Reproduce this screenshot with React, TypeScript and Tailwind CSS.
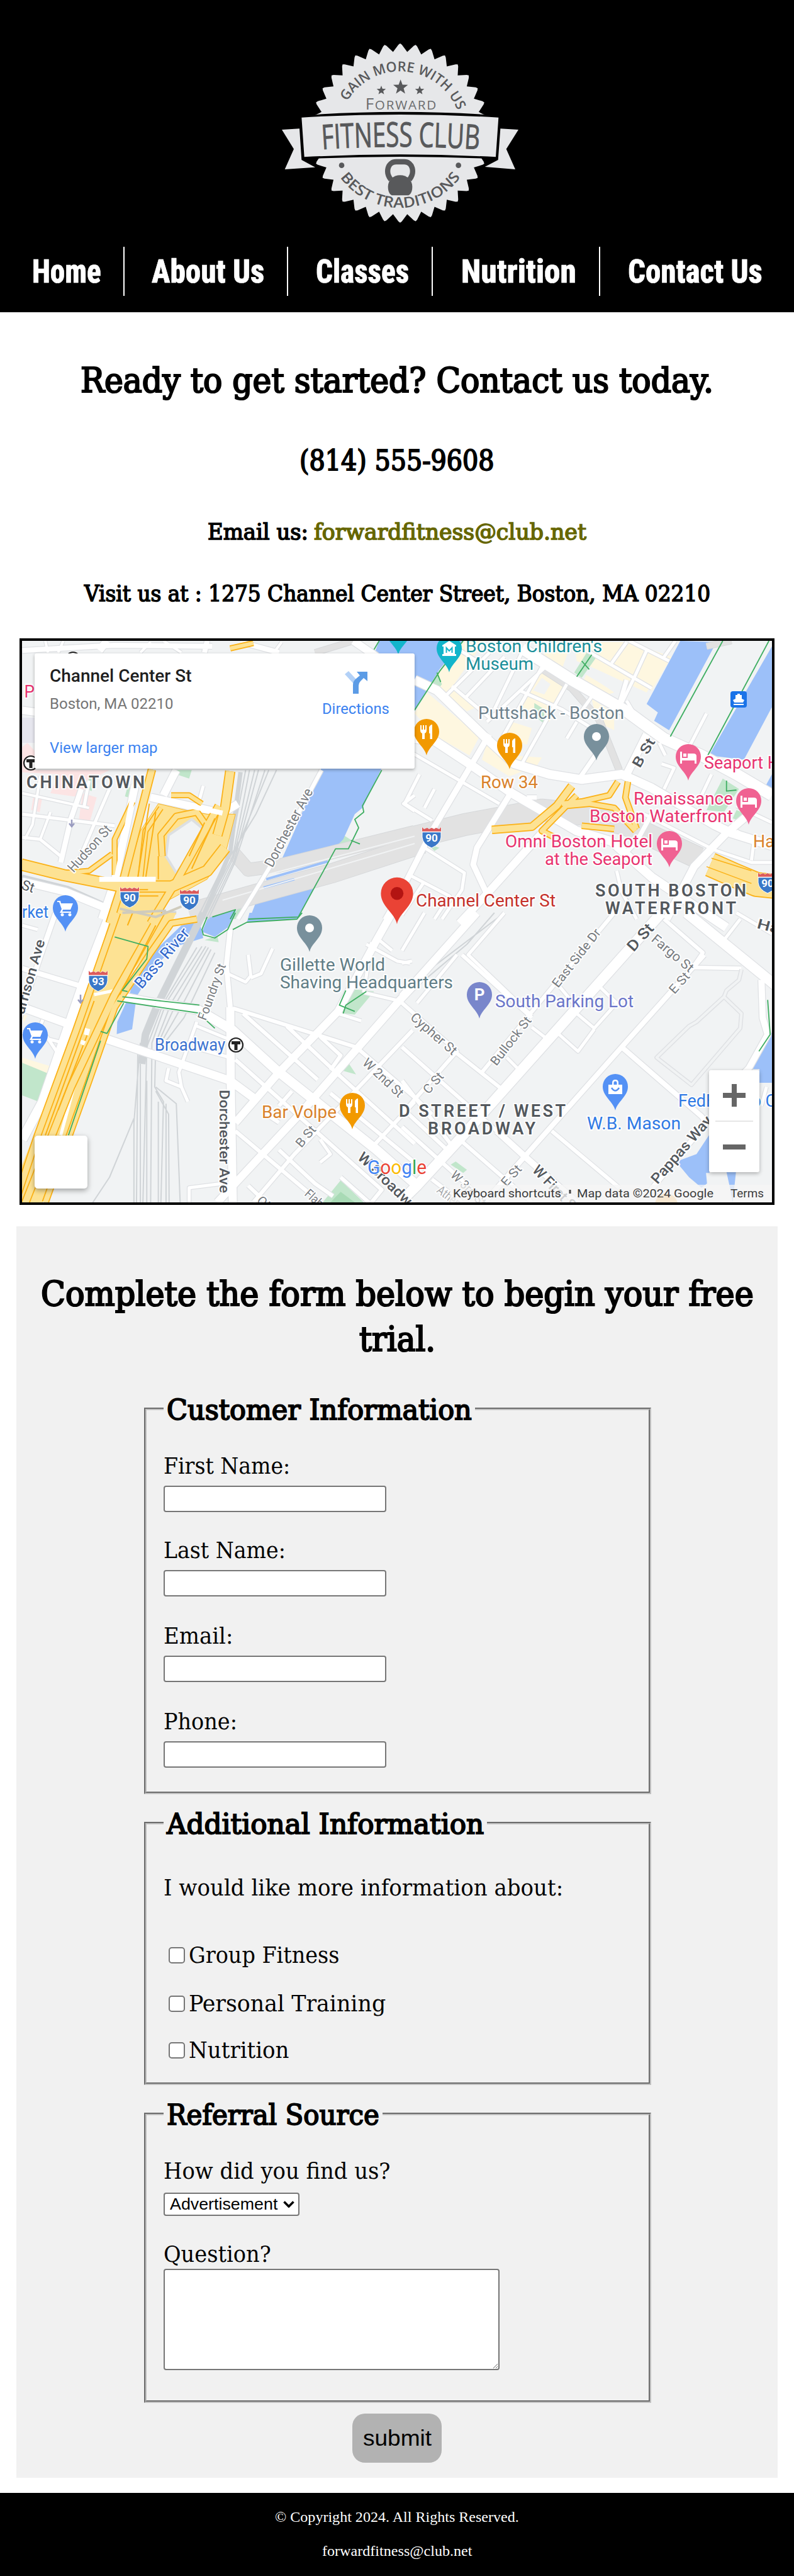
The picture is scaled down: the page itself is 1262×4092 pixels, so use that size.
import React, { useLayoutEffect, useRef, useState } from "react";

/* Inline text condensed horizontally to a given width. */
function Fit({ w, className = "", children }: { w: number; className?: string; children: React.ReactNode }) {
  const ref = useRef<HTMLSpanElement>(null);
  const [s, setS] = useState(1);
  useLayoutEffect(() => {
    if (ref.current && ref.current.offsetWidth) setS(w / ref.current.offsetWidth);
  }, [w]);
  return (
    <span className="inline-block text-left align-top" style={{ width: w }}>
      <span ref={ref} className={"inline-block origin-left whitespace-nowrap " + className} style={{ transform: `scaleX(${s})` }}>
        {children}
      </span>
    </span>
  );
}

/* ---------- Logo ---------- */
function gear() {
  const pts: string[] = [];
  const cx = 648, cy = 484;
  for (let i = 0; i < 36; i++) {
    const a = (i * 10 * Math.PI) / 180;
    const put = (r: number, d: number) => {
      const t = a + (d * Math.PI) / 180;
      pts.push(`${(cx + r * Math.sin(t)).toFixed(1)},${(cy - r * Math.cos(t)).toFixed(1)}`);
    };
    put(388, -5);
    put(421, -1.1);
    put(427, 0);
    put(421, 1.1);
  }
  return pts.join(" ");
}
const star = (cx: number, cy: number, r: number) =>
  Array.from({ length: 10 }, (_, i) => {
    const q = i % 2 ? r * 0.42 : r;
    const a = (i * Math.PI) / 5;
    return `${(cx + q * Math.sin(a)).toFixed(1)},${(cy - q * Math.cos(a)).toFixed(1)}`;
  }).join(" ");

function Logo() {
  const light = "#e6e7e9", dark = "#58595b";
  return (
    <svg viewBox="0 0 1290 960" className="block h-[320px] w-[430px]" role="img" aria-label="Forward Fitness Club">
      <defs>
        <path id="arcTop" d="M354 484 A294 294 0 0 1 942 484" />
        <path id="arcBot" d="M292 484 A356 356 0 0 0 1004 484" />
        <path id="arcMid" d="M270 562 Q648 536 1030 562" />
      </defs>
      <polygon points={gear()} fill={light} />
      <path d="M150 412 L260 395 Q648 372 1040 395 L1150 412 V600 L1060 606 Q648 588 235 606 L150 600Z" fill="#000" />
      <path d="M178 410 Q648 382 1117 410 L1104 598 Q648 574 191 598Z" fill={light} />
      <path d="M84 468 L168 463 L178 612 L243 647 L98 657 L141 560Z M1212 468 L1126 463 L1115 612 L1052 645 L1197 657 L1154 560Z" fill={light} />
      <g fill={dark} style={{ fontFamily: '"Open Sans", sans-serif' }}>
        <text fontSize="66" fontWeight="600"><textPath href="#arcTop" startOffset="158" textLength="655" lengthAdjust="spacingAndGlyphs">GAIN MORE WITH US</textPath></text>
        <text fontSize="70" fontWeight="600"><textPath href="#arcBot" startOffset="226" textLength="668" lengthAdjust="spacingAndGlyphs">BEST TRADITIONS</textPath></text>
        <text fontSize="162" fontWeight="400" stroke={dark} strokeWidth="3"><textPath href="#arcMid" startOffset="6" textLength="750" lengthAdjust="spacingAndGlyphs">FITNESS CLUB</textPath></text>
      </g>
      <text x="482" y="372" fontSize="62" textLength="338" fill="#6b6c6e" style={{ fontFamily: '"Open Sans", sans-serif' }}>
        <tspan fontSize="78">F</tspan>ORWARD
      </text>
      <polygon points={star(650, 266, 37)} fill={dark} />
      <polygon points={star(558, 281, 23)} fill={dark} />
      <polygon points={star(741, 281, 23)} fill={dark} />
      <circle cx="369" cy="638" r="13" fill={dark} />
      <circle cx="926" cy="638" r="13" fill={dark} />
      <path d="M604 706 C576 672 588 621 628 621 H668 C708 621 720 672 692 706" fill="none" stroke={dark} strokeWidth="25" />
      <path d="M648 685 C680 685 706 708 706 740 C706 762 698 781 682 781 H614 C598 781 590 762 590 740 C590 708 616 685 648 685Z" fill={dark} />
    </svg>
  );
}

/* ---------- Map ---------- */
const TILE = {
  a: "translate(20 1000) scale(.40816 .33333)",
  b: "translate(640 1000) scale(.39669 .33333)",
  c: "translate(20 1450) scale(.40816 .33333)",
  d: "translate(640 1450) scale(.39669 .33333)",
};
type K = keyof typeof TILE;
const P = ({ t, d, w, s, f = "none" }: { t: K; d: string; w?: number; s?: string; f?: string }) => (
  <path transform={TILE[t]} d={d} fill={f} stroke={s ?? "none"} strokeWidth={w ?? 0} strokeLinejoin="round" vectorEffect="non-scaling-stroke" />
);

const ROADS: [K, number, string][] = [
  ["a", 4, "M40 780 L300 850 M110 700 L80 930 L50 1000 M150 870 L110 1000 M540 60 L500 110 M130 54 L140 110 M200 54 L180 110 M590 54 L660 110 M1050 60 L1020 110"],
  ["a", 5, "M40 880 L400 935 M40 990 L110 1000 L190 1080 M380 760 L330 900 L260 1100 M300 720 L280 850 M745 745 L710 900 L650 1130 M1568 790 L1525 830 L1568 865 M1568 1130 L1450 1380"],
  ["a", 8, "M270 760 L230 900 L190 1110 M40 100 L400 75 L780 80 M760 54 L750 110 M890 60 L1040 110"],
  ["a", 12, "M40 385 L100 395 M640 670 L590 790 M1330 54 L1420 130 M370 54 L340 100"],
  ["a", 12, "M480 740 L400 1200 L350 1380 M540 800 L820 875 L880 830 M40 1200 L210 1250 L390 1340"],
  ["a", 6, "M1205 670 L1000 1140 L880 1380"],
  ["b", 5, "M350 110 L180 310 M410 130 L250 330 M480 110 L370 380 M200 270 L350 420 M470 290 L640 380 L760 470 M380 560 L470 370 L560 180 M660 260 L480 640 M760 320 L700 420 M900 60 L840 160 M1050 130 L1095 54 M980 100 L930 230 L860 400 M740 100 L1000 280 M910 54 L1070 150 M300 150 L180 60 M0 560 L390 830 M70 690 L10 830 L120 910 M130 760 L90 850 M340 440 L600 150"],
  ["b", 5, "M90 1040 L250 1160 L240 1240 L160 1380 M30 1170 L190 1270 L130 1380 M90 1200 L0 1360 M860 1150 L880 1250 L940 1380 M970 880 L1250 1050 L1400 1110 L1482 1110 M1400 1100 L1410 1010 L1340 960 M1482 920 L1340 840 M1220 400 L1150 560 M1240 690 L1180 840 M1050 760 L1090 660 L1040 640 M1055 600 L1030 540 M930 400 L900 340 M660 520 L700 440"],
  ["b", 7, "M780 590 L710 710 M900 240 L870 360 M1000 880 L940 1010 L900 1060 M540 800 L500 800"],
  ["b", 9, "M350 500 L120 960 L0 1240 M430 790 L300 1040 L285 1120 L340 1260"],
  ["b", 14, "M50 240 L140 290 L330 510 L450 640 L590 690 L720 715 L880 690 L1000 755 L1250 930 L1320 970 L1482 1030 M50 520 L130 530 L270 640 L440 780 L700 960 L840 1010 L1000 1180 L1300 1420"],
  ["b", 18, "M480 90 L680 240 L900 390 L1050 520 L1200 600 L1340 690 L1482 790"],
  ["b", 12, "M560 970 L340 1260 L230 1400 M980 500 L900 690 M1390 880 L1300 970 L1170 1130 L1060 1380"],
  ["c", 5, "M40 60 L100 80 M1370 380 L1400 140 M40 570 L200 620 M120 510 L90 600 M130 580 L190 690 M720 520 L650 760 L660 830 L685 900 M610 740 L600 800 L660 830 M720 540 L840 600 M690 1380 L690 1310 L820 1290 M920 200 L930 300 L910 330 L840 290 M1015 170 L970 290 L930 310 M1370 380 L1510 420 M1270 480 L1360 515 M730 650 L850 690 M1200 1080 L1240 1150 L1200 1190 M1380 150 L1500 230 L1550 240 M1420 120 L1480 180"],
  ["c", 6, "M860 455 L900 470 L1340 640 L1568 880 M900 480 L1190 795 M1070 540 L1270 770 L1568 1100 M870 700 L1440 1320 L1400 1380 M870 1040 L1200 1380 M940 1380 L1100 1150 L1250 960 L1560 560 M1090 850 L1040 920 M1400 1120 L1568 900 M1200 590 L1280 680 L1240 750 M920 1300 L980 1370 M1040 1130 L1180 1290 L1250 1350 M1280 1260 L1390 1380 M1150 630 L1090 700 M1240 860 L1568 1190 M990 960 L1040 1000"],
  ["c", 8, "M170 0 L110 210 L30 500 M850 80 L835 250 L850 450 M40 265 L270 350"],
  ["c", 13, "M40 450 L220 530 M340 590 L560 680 L850 800 L950 890 M410 395 L560 430 M850 450 L852 820 L860 1380"],
  ["c", 15, "M560 430 L720 460 L860 560 L1030 750 L1420 1130 L1568 1290 M385 0 L280 330 L120 900 L40 1080"],
  ["c", 12, "M870 1000 L1040 760 L1270 470 L1420 130 L1480 0 M800 1380 L1120 960 L1500 430 L1600 300"],
  ["d", 5, "M410 0 L265 200 L520 490 M220 200 L60 430 M630 350 L700 450 M790 350 L860 430 L770 550 L690 470 M620 570 L705 660 L770 555 M520 545 L580 600 M420 690 L470 750 M90 0 L0 180 M0 240 L40 230 M1355 30 L1290 130 M1482 100 L1340 0 M1460 830 L1440 920"],
  ["d", 6, "M850 0 L500 500 L320 760 M1050 30 L1205 190 L1165 260 L1360 265 M600 1040 L870 1310 M220 670 L400 840 M0 430 L220 660 L50 890 L0 960 M240 200 L520 500 M0 640 L380 1040 M0 800 L200 1110 M0 1020 L340 1380 M240 1090 L520 1380 M0 930 L190 1140 M120 1270 L240 1380 M60 890 L120 960"],
  ["d", 8, "M1210 200 L880 640 L500 1150 L330 1380 M880 640 L1200 970 L1220 1000 L990 1330"],
  ["d", 10, "M380 1040 L500 1170 L700 1380 M1440 320 L1445 500 L1465 580 L1390 740 L1340 800"],
  ["d", 16, "M1140 0 L1460 310 L1500 350 M1040 0 L680 480 L230 1080 L60 1300 L0 1370"],
  ["d", 12, "M300 0 L0 400"],
];

const WATER: [K, string][] = [
  ["a", "M1430 54 H1568 V120 H1410Z"],
  ["a", "M1205 660 H1440 L1365 850 L1335 880 L1290 1000 L1250 1050 L1045 1110 L1100 960 L1175 740Z"],
  ["a", "M1185 1210 L1110 1380 H925 L950 1300Z"],
  ["a", "M770 1380 L875 1330 L860 1380Z"],
  ["b", "M0 54 H245 L150 190 L50 385 V110 H0Z"],
  ["b", "M1115 54 L1260 60 L1070 480 L1010 435 L1025 395 L980 355Z"],
  ["b", "M1482 80 V370 L1370 620 L1230 600Z"],
  ["b", "M1482 690 L1452 755 L1482 780Z"],
  ["c", "M925 0 H1130 L1110 30 L915 45Z"],
  ["c", "M870 0 L840 70 L790 115 L740 90 L765 20Z"],
  ["c", "M730 40 L660 60 L540 200 L480 290 L455 400 L410 520 L408 578 L468 555 L485 400 L560 250 L640 160 L745 120Z"],
  ["d", "M1482 570 L1390 745 H1432 V810 H1482Z"],
  ["d", "M1230 1060 L1180 1150 L1112 1180 L1108 1200 L1150 1260 L1200 1310 L1222 1290 L1218 1240 H1232Z"],
  ["d", "M1300 1235 H1338 L1325 1380 L1312 1300Z"],
];

const AREAS: [K, string, string][] = [
  ["a", "#fce4e4", "M60 540 L90 580 V670 H380 L300 720 L270 800 L150 780 L180 690 L40 680 V560Z M85 785 L118 800 L108 870 L75 860Z M275 780 L330 800 L300 930 L260 910Z"],
  ["a", "#e6e6ee", "M40 420 H90 V540 H40Z"],
  ["a", "#c1e6cb", "M640 670 L700 670 L690 710 L640 690Z M450 750 L480 760 L465 805 L440 795Z M1285 975 L1330 1010 L1310 1040 L1260 1035Z M880 1330 L905 1330 L870 1380 H850Z M300 700 L320 710 L310 770 L295 760Z"],
  ["b", "#fef7e0", "M250 54 H330 L180 310 L110 260Z M560 180 L660 250 L590 440 L470 370Z M690 60 H900 L1060 150 L980 300 L780 190 L700 150Z M740 210 L850 300 L800 320 L720 260Z M100 300 L310 510 L270 600 L140 510 L50 400Z M340 540 L430 600 L560 610 L540 650 L430 700 L320 620Z M200 280 L300 370 L260 390 L190 320Z M620 60 L680 60 L640 190 L540 150Z M440 440 L520 470 L500 550 L400 510Z M760 330 L850 400 V480 L780 440Z M910 80 H960 L1080 130 L1000 290 L900 240Z"],
  ["b", "#f1f3f4", "M560 230 L595 260 L570 310 L525 290Z M740 170 L890 270 L870 310 L730 210Z"],
  ["b", "#c1e6cb", "M740 110 L780 130 L720 230 L690 205Z M170 130 L140 210 L160 260 L145 285 L115 250Z M1285 710 L1350 760 L1290 870 L1220 860Z M530 350 L570 380 L570 450 L530 410Z M1340 860 L1380 880 L1350 910 L1325 900Z M100 1020 L150 1040 L130 1055Z"],
  ["c", "#c1e6cb", "M1300 360 L1410 375 L1335 485 L1265 475Z M40 710 L150 770 L115 905 L40 870Z M1280 1275 L1370 1380 H1210Z M1310 715 L1340 770 L1280 750Z M800 110 L805 140 L750 130Z"],
  ["c", "#a8dab5", "M1280 1330 L1335 1380 H1240Z"],
  ["c", "#fef7e0", "M40 690 L160 735 L150 770 L40 715Z M40 485 L60 490 L45 525Z"],
  ["d", "#c1e6cb", "M215 1185 L260 1225 L245 1240 L195 1200Z"],
];

const TUNNEL: [K, number, string][] = [
  ["a", 20, "M860 1060 L920 1145 L1040 1125 L1568 965"],
  ["a", 30, "M690 1350 L950 1260 L1250 1160 L1600 1020"],
  ["b", 34, "M-20 1010 L250 930 L560 860 L720 880 L900 930 L1190 1090"],
  ["b", 10, "M550 180 L680 280 L790 430 L870 670"],
  ["b", 9, "M1220 80 L1320 54 M0 300 L-20 280"],
  ["a", 9, "M1180 110 L1330 54"],
];

const RAIL: [K, number, string][] = [
  ["a", 2, "M910 670 L850 1060 L720 1380 M925 670 L860 1080 L735 1380 M945 670 L862 1090 L745 1380 M960 670 L866 1100 L755 1380 M985 670 L868 1110 L765 1380 M1000 670 L870 1060 M1030 670 L950 880 L850 1080"],
  ["a", 7, "M890 680 L850 1060 L740 1380"],
  ["a", 5, "M40 1175 L220 1230 L420 1340 L640 1350 M40 1190 L220 1250 L420 1360"],
  ["c", 12, "M745 0 L680 160 L570 430 L520 580 L505 720"],
  ["c", 2, "M740 160 L600 430 L545 620 L540 1380 M755 160 L620 430 L560 620 L556 830 L590 900 L580 1380 M765 165 L640 430 L570 620 M775 175 L655 460 L580 620 M790 190 L670 500 L600 610 M720 165 L590 430 L525 640 L510 1380 M560 830 L640 910 L655 1380 M500 620 L475 1000 L475 1380 M490 650 L485 1380 M500 1380 L500 720 M525 1380 L525 800 M570 1380 L570 900 M600 1380 L600 910 M612 1380 L610 960 L560 850 M475 980 L380 1260 L315 1380"],
  ["d", 2, "M370 0 L260 150 L0 410 M410 0 L0 370"],
];

const HWY: [K, number, string][] = [
  ["a", 10, "M545 667 L430 1210 L380 1400"],
  ["a", 13, "M850 675 L830 850 L800 980"],
  ["a", 16, "M36 1120 L200 1170 L430 1225 L620 1225 L760 1150 L830 1040"],
  ["a", 6, "M620 790 H690 L740 830 M470 820 L400 1000 L400 1170 M390 1070 L300 1150 L200 1160 M850 90 L940 65 M500 1190 L520 960 L580 850"],
  ["a", 8, "M585 1080 L580 980 L640 890 L720 870 L760 940"],
  ["a", 10, "M805 840 L640 1200 L540 1400"],
  ["b", 10, "M680 745 L620 840 L520 940 L360 955"],
  ["b", 7, "M865 725 L830 790 L720 820 L640 830 M905 725 L895 800 L940 950 M660 840 L750 830 L850 850 L935 960 M720 935 L850 950 M700 790 L560 960 L610 990"],
  ["b", 36, "M1235 1120 L1330 1170 L1420 1215 L1500 1225"],
  ["c", 9, "M410 0 L250 560 L100 1060 L-20 1500"],
  ["c", 10, "M580 0 L400 390 L230 830 L40 1420"],
  ["c", 8, "M720 30 L620 50 L540 190 L400 450 L300 800 L130 1380"],
];

const PATHS_GREEN: [K, string][] = [
  ["a", "M1440 670 L1365 840 L1370 870 L1335 905 L1350 945 L1310 1045 H1260 L1115 1370 L920 1380 M1320 1005 L1355 1022 M780 1370 L870 1335 L850 1380 M1430 54 L1410 95"],
  ["b", "M245 54 L150 200 L50 385 M1285 54 L1075 510 M1470 54 L1225 600 M140 205 L155 250 M760 120 L700 225 M720 150 L750 190 M1300 720 V770 L1340 765"],
  ["c", "M1130 0 L1110 30 L915 45 L860 80 M870 0 L840 80 L790 120 L745 105 L740 80 L760 20 M400 115 L530 160 L525 220 L430 370 L450 375 M410 420 L740 480 M430 400 L730 440 M435 430 L370 575 L345 565 M345 610 L220 1060 M1300 370 L1275 440 L1335 470 M1380 375 L1300 440 L1290 480 M750 505 L790 550"],
  ["d", "M1465 415 L1475 580 L1430 660"],
];

type L = [number, number, number, string, string, number?, number?, number?];
/* x, baseline, width, text, colour, angle, font size, weight */
const GREY = "#777b80", DK = "#53585d", PINK = "#e8336f", BLUE = "#2f7ae5", OR = "#d9822b";
const LABELS: L[] = [
  [741, 1036, 217, "Boston Children's", "#1b8f9a"],
  [741, 1064, 108, "Museum", "#1b8f9a"],
  [761, 1142, 232, "Puttshack - Boston", "#6d818c"],
  [765, 1252, 91, "Row 34", OR],
  [1120, 1221, 120, "Seaport H", PINK],
  [1008, 1278, 158, "Renaissance", PINK],
  [938, 1306, 228, "Boston Waterfront", PINK],
  [804, 1346, 234, "Omni Boston Hotel", PINK],
  [867, 1374, 171, "at the Seaport", PINK],
  [662, 1440, 222, "Channel Center St", "#c5312b"],
  [1198, 1346, 58, "Harp", OR],
  [36, 1458, 42, "rket", BLUE],
  [446, 1542, 167, "Gillette World", "#607d86"],
  [446, 1570, 275, "Shaving Headquarters", "#607d86"],
  [247, 1669, 112, "Broadway", "#3b73d1"],
  [417, 1776, 119, "Bar Volpe", OR],
  [788, 1600, 220, "South Parking Lot", "#6a75c9"],
  [934, 1794, 149, "W.B. Mason", BLUE],
  [1079, 1758, 156, "FedEx Ship C", BLUE],
  [20, 1108, 36, "k P", PINK],
  [118, 1387, 92, "Hudson St", GREY, -48, 22],
  [434, 1379, 138, "Dorchester Ave", GREY, -62, 22],
  [34, 1412, 20, "St", DK, 18, 22],
  [39, 1612, 122, "arrison Ave", DK, -74, 22, 500],
  [226, 1572, 118, "Bass River", "#2f66cc", -49, 25],
  [328, 1622, 94, "Foundry St", GREY, -70, 20],
  [350, 1731, 164, "Dorchester Ave", DK, 90, 22, 500],
  [576, 1690, 80, "W 2nd St", GREY, 43, 21],
  [480, 1824, 38, "B St", GREY, -50, 20],
  [652, 1618, 90, "Cypher St", GREY, 41, 21],
  [790, 1694, 92, "Bullock St", GREY, -52, 20],
  [682, 1739, 38, "C St", GREY, -48, 20],
  [888, 1570, 112, "East Side Dr", GREY, -52, 20],
  [1008, 1513, 50, "D St", DK, -48, 24, 500],
  [1035, 1494, 80, "Fargo St", GREY, 40, 21],
  [1073, 1580, 38, "E St", GREY, -48, 20],
  [1018, 1221, 50, "B St", DK, -60, 22, 500],
  [1203, 1474, 60, "Haul", DK, 15, 22, 500],
  [1046, 1882, 134, "Pappas Way", DK, -49, 23, 500],
  [846, 1860, 95, "W First St", DK, 46, 23, 500],
  [568, 1840, 135, "W Broadway", DK, 44, 23, 500],
  [806, 1886, 38, "E St", GREY, -48, 20],
  [716, 1868, 70, "W 3rd St", GREY, 45, 20],
  [694, 1893, 70, "Athens St", "#a5a8ab", 38, 20],
  [484, 1898, 60, "Flaherty", GREY, 42, 20],
  [408, 1908, 30, "Old", GREY, 45, 20],
];

function Pin({ x, y, c, children, k = 1 }: { x: number; y: number; c: string; children?: React.ReactNode; k?: number }) {
  return (
    <g transform={`translate(${x} ${y}) scale(${k})`}>
      <path d="M0 0 C-3 -14 -20 -22 -20 -38 A20 20 0 0 1 20 -38 C20 -22 3 -14 0 0Z" fill={c} />
      <g transform="translate(0 -38)">{children}</g>
    </g>
  );
}
const Fork = () => (
  <path d="M-10 -10 V-2 Q-10 2 -7 3 V12 H-3 V3 Q0 2 0 -2 V-10 H-2 V-3 H-4 V-10 H-6 V-3 H-8 V-10Z M4 -7 Q6 -11 9 -11 V12 H5.5 V3 H4Z" fill="#fff" />
);
const Bed = () => <path d="M-13 -8 V11 H-10 V6 H10 V11 H13 V-1 Q13 -5 8 -5 H-1 V2 H-10 V-8Z M-8 -5 H-3 V0 H-8Z" fill="#fff" />;
const Cart = () => (
  <g fill="#fff">
    <path d="M-13 -11 H-8 L-7 -7 H12 L8 3 H-4 L-5 6 H9 V8 H-9 L-6 2 L-10 -9 H-13Z" />
    <circle cx="-5" cy="11" r="2.5" /><circle cx="7" cy="11" r="2.5" />
  </g>
);
const Museum = () => (
  <g>
    <path d="M0 -12 L11 -5 V-3 H-11 V-5Z M-9 -3 H9 V9 H11 V12 H-11 V9 H-9Z" fill="#fff" />
    <path d="M-4.500 7 V-1 L0 4 L4.500 -1 V7" fill="none" stroke="#12b5cb" strokeWidth="2" />
  </g>
);
function Shield({ x, y, n }: { x: number; y: number; n: string }) {
  return (
    <g transform={`translate(${x} ${y})`}>
      <path d="M-15 -16 L-12 -13 L-7 -15 L-4 -13 L0 -15 L4 -13 L7 -15 L12 -13 L15 -16 V0 Q14 11 0 17 Q-14 11 -15 0Z" fill="#3a78c8" stroke="#fff" strokeWidth="1" />
      <path d="M-15 -16 L-12 -13 L-7 -15 L-4 -13 L0 -15 L4 -13 L7 -15 L12 -13 L15 -16 V-9 H-15Z" fill="#dc5a5a" />
      <path d="M-15 -8.500 H15" stroke="#fff" strokeWidth="1.500" />
      <text y="7" textAnchor="middle" fontSize="17" fontWeight="700" fill="#fff">{n}</text>
    </g>
  );
}
const TStop = ({ x, y }: { x: number; y: number }) => (
  <g>
    <circle cx={x} cy={y} r="11" fill="#fff" stroke="#222" strokeWidth="2.200" />
    <path d={`M${x - 7} ${y - 6} h14 v5 h-4.500 v9 h-5 v-9 h-4.500Z`} fill="#222" />
  </g>
);

function MapArt() {
  return (
    <svg viewBox="36 1018 1192 892" className="block h-[892px] w-[1192px]" style={{ fontFamily: "Roboto, sans-serif" }}>
      <rect x="36" y="1018" width="1192" height="892" fill="#f1f3f4" />
      {AREAS.map(([t, c, d], i) => <P key={i} t={t} d={d} f={c} />)}
      {WATER.map(([t, d], i) => <P key={i} t={t} d={d} f="#9cc0f9" />)}
      {TUNNEL.map(([t, w, d], i) => <P key={i} t={t} d={d} w={w + 2} s="#d6d8da" />)}
      {TUNNEL.map(([t, w, d], i) => <P key={i} t={t} d={d} w={w} s="#e2e2e2" />)}
      <P t="a" d="M990 1190 L1230 1105 M980 1230 L1100 1190" w={4} s="#9cc0f9" />
      <P t="a" d="M800 1230 L1568 985 M820 1290 L1568 1020" w={2} s="#f1f3f4" />
      {RAIL.map(([t, w, d], i) => <P key={i} t={t} d={d} w={w} s="#d0d4d7" />)}
      {ROADS.map(([t, w, d], i) => <P key={i} t={t} d={d} w={w + 2.5} s="#dfe1e4" />)}
      {ROADS.map(([t, w, d], i) => <P key={i} t={t} d={d} w={w} s="#fff" />)}
      <P t="d" d="M1360 270 L1350 320 L1300 370 L1290 400 L1360 480 L1355 550 L1160 820 L1020 690 L1150 540 L1180 520 L1290 400" w={7} s="#dfe1e4" />
      <P t="d" d="M1360 270 L1350 320 L1300 370 L1290 400 L1360 480 L1355 550 L1160 820 L1020 690 L1150 540 L1180 520 L1290 400" w={4} s="#f1f3f4" />
      <P t="a" d="M570 830 L690 865 L760 880 L870 880 L835 1050 L760 1190 L610 1290 L570 1380 H390 L440 1200 L500 960Z" f="#fde293" s="#fbb724" w={1} />
      <P t="a" d="M610 980 L700 905 L745 950 L690 1080 L640 1160 L600 1080Z" f="#f1f3f4" s="#dcdfe2" w={4} />
      <P t="c" d="M390 0 H640 L610 80 L480 260 L400 440 L330 640 L220 1060 L120 1380 H30 V1230 L250 560Z" f="#fde293" />
      <P t="c" d="M270 700 L190 1060 M320 390 L400 370" w={5} s="#fff" />
      {HWY.map(([t, w, d], i) => <P key={i} t={t} d={d} w={w + 3.5} s="#fbb116" />)}
      {HWY.map(([t, w, d], i) => <P key={i} t={t} d={d} w={w} s="#fde293" />)}
      <P t="a" d="M535 830 L490 1180 M560 870 L520 1190 M570 1190 V1080 M790 900 L700 1140 M750 920 L690 1080 M440 1240 H530 M420 1270 H570" w={2} s="#fbb116" />
      <P t="b" d="M1240 1090 L1400 1150 M1220 1130 L1400 1210" w={1.5} s="#fbb116" />
      <P t="c" d="M320 420 L130 1060 M300 560 L180 940 M470 0 L450 60 M560 60 L420 390" w={2} s="#fbb116" />
      <P t="a" d="M420 1330 L560 1370 L660 1320 M430 1350 L600 1340" w={4} s="#cfcbbd" />
      <P t="a" d="M480 740 L405 1200 M540 800 L820 875 M340 1190 L560 1190" w={8} s="#fff" />
      <P t="c" d="M285 548 L305 555 L298 585 L280 580Z M270 605 L288 612 L280 632 L266 625Z" f="#fff" />
      {PATHS_GREEN.map(([t, d], i) => <P key={i} t={t} d={d} w={1.8} s="#3fae62" />)}
      <path d="M115 1302 V1312 M111 1308 L115 1313 L119 1308 M129 1580 V1592 M125 1588 L129 1593 L133 1588" stroke="#9a9cc0" strokeWidth="2.500" fill="none" />

      <g stroke="#fff" strokeWidth="4" strokeLinejoin="round" strokeOpacity=".9">
        {LABELS.map(([x, y, w, s, c, r = 0, fs = 27, wt = 400], i) => (
          <text key={i} transform={`translate(${x} ${y}) rotate(${r})`} fontSize={fs} fontWeight={wt} fill={c} textLength={w} lengthAdjust="spacingAndGlyphs" style={{ paintOrder: "stroke" }}>
            {s}
          </text>
        ))}
        <g fontSize="27" fontWeight="600" fill={DK} style={{ paintOrder: "stroke" }}>
          <text x="43" y="1252" textLength="188">CHINATOWN</text>
          <text x="947" y="1424" textLength="240">SOUTH BOSTON</text>
          <text x="963" y="1452" textLength="208">WATERFRONT</text>
          <text x="635" y="1774" textLength="265">D STREET / WEST</text>
          <text x="681" y="1802" textLength="171">BROADWAY</text>
        </g>
      </g>

      <Pin x={634} y={1040} c="#12b5cb"><Museum /></Pin>
      <Pin x={715} y={1068} c="#12b5cb"><Museum /></Pin>
      <Pin x={679} y={1200} c="#f29900"><Fork /></Pin>
      <Pin x={811} y={1222} c="#f29900"><Fork /></Pin>
      <Pin x={561} y={1794} c="#f29900"><Fork /></Pin>
      <Pin x={949} y={1208} c="#78909c"><circle r="7" fill="#fff" /></Pin>
      <Pin x={493} y={1512} c="#78909c"><circle r="7" fill="#fff" /></Pin>
      <Pin x={1095} y={1240} c="#f06292"><Bed /></Pin>
      <Pin x={1191} y={1310} c="#f06292"><Bed /></Pin>
      <Pin x={1065} y={1378} c="#f06292"><Bed /></Pin>
      <Pin x={105} y={1480} c="#5491f5"><Cart /></Pin>
      <Pin x={57} y={1682} c="#5491f5"><Cart /></Pin>
      <Pin x={763} y={1618} c="#7986cb"><text y="9" textAnchor="middle" fontSize="26" fontWeight="700" fill="#fff">P</text></Pin>
      <Pin x={979} y={1764} c="#5491f5">
        <path d="M-11 -3 H11 V12 H-11Z M-5 -3 V-6 Q-5 -11 0 -11 Q5 -11 5 -6 V-3 H2.500 V-6 Q2.500 -8.500 0 -8.500 Q-2.500 -8.500 -2.500 -6 V-3Z" fill="#fff" />
        <path d="M-6 2 Q0 11 6 2" fill="none" stroke="#5491f5" strokeWidth="2.500" />
      </Pin>
      <Pin x={632} y={1468} c="#ea4335" k={1.28}><circle r="8" fill="#b31412" /></Pin>

      <TStop x={376} y={1660} />
      <TStop x={50} y={1212} />
      <TStop x={117} y={1047} />
      <g transform="translate(1175 1111)">
        <rect x="-13" y="-13" width="26" height="26" rx="4" fill="#1a73e8" />
        <path d="M-2 -9 H2 V-7 H5 V-1 L9 1 L7 5 H-7 L-9 1 L-5 -1 V-7 H-2Z M-8 7 H8 V9 H-8Z" fill="#fff" />
      </g>
      <Shield x={207} y={1425} n="90" />
      <Shield x={302} y={1429} n="90" />
      <Shield x={687} y={1330} n="90" />
      <Shield x={1221} y={1402} n="90" />
      <Shield x={157} y={1558} n="93" />

      <text x="585" y="1865" fontSize="31" fontWeight="400" textLength="94" lengthAdjust="spacingAndGlyphs" stroke="#fff" strokeWidth="3" style={{ paintOrder: "stroke" }}>
        <tspan fill="#4285f4">G</tspan><tspan fill="#ea4335">o</tspan><tspan fill="#fbbc05">o</tspan><tspan fill="#4285f4">g</tspan><tspan fill="#34a853">l</tspan><tspan fill="#ea4335">e</tspan>
      </text>
      <circle cx="1060" cy="1914" r="18" fill="#f6bd64" />
      <rect x="716" y="1882" width="512" height="28" fill="#f5f5f5" fillOpacity=".75" />
      <g fontSize="19" fill="#3c3c3c">
        <text x="721" y="1902" textLength="172" lengthAdjust="spacingAndGlyphs">Keyboard shortcuts</text>
        <path d="M907 1890 v6" stroke="#444" strokeWidth="3" />
        <text x="918" y="1902" textLength="217" lengthAdjust="spacingAndGlyphs">Map data ©2024 Google</text>
        <text x="1162" y="1902" textLength="53" lengthAdjust="spacingAndGlyphs">Terms</text>
      </g>
    </svg>
  );
}

function MapPanel() {
  return (
    <div className="relative mx-auto mt-[47px] h-[900px] w-[1200px] overflow-hidden border-4 border-black font-[Roboto]">
      <MapArt />
      <div className="absolute left-[20px] top-[20px] flex h-[183px] w-[604px] justify-between rounded-[3px] bg-white pl-6 pr-10 pt-5 shadow-[0_2px_5px_rgba(0,0,0,.3)]">
        <div className="flex flex-col">
          <div className="h-[36px] text-[27px] font-medium leading-[32px] text-[#1f1f1f]"><Fit w={225}>Channel Center St</Fit></div>
          <div className="mt-2 h-[32px] text-[23.5px] leading-[32px] text-[#757575]"><Fit w={196}>Boston, MA 02210</Fit></div>
          <div className="mt-[38px] h-[32px] text-[24px] leading-[32px] text-[#3b82f0]"><Fit w={172}>View larger map</Fit></div>
        </div>
        <div className="flex flex-col items-center pt-2">
          <svg viewBox="0 0 36 36" className="h-9 w-9">
            <path d="M0 5 L6 0 L18 13 L14 20Z" fill="#b3d1f7" />
            <path d="M13 36 V22 Q13 16 18 12 L24 7 L19 1 H36 V16 L30 11 L25 16 Q22 19 22 23 V36Z" fill="#5c9ce6" />
          </svg>
          <div className="mt-[8px] text-[24px] leading-[32px] text-[#3b82f0]"><Fit w={107}>Directions</Fit></div>
        </div>
      </div>
      <div className="absolute bottom-[22px] left-[20px] h-[84px] w-[84px] rounded-[5px] bg-white shadow-[0_3px_8px_rgba(0,0,0,.35)]" />
      <div className="absolute bottom-[48px] right-[20px] flex h-[162px] w-[80px] flex-col items-center rounded-[3px] bg-white shadow-[0_2px_6px_rgba(0,0,0,.3)]">
        <div className="flex h-[80px] items-center">
          <svg viewBox="0 0 36 36" className="h-9 w-9"><path d="M14 0 H22 V14 H36 V22 H22 V36 H14 V22 H0 V14 H14Z" fill="#666" /></svg>
        </div>
        <div className="h-[2px] w-[60px] bg-[#e6e6e6]" />
        <div className="flex h-[80px] items-center"><div className="h-[8px] w-[36px] bg-[#666]" /></div>
      </div>
    </div>
  );
}

/* ---------- Page ---------- */
const NAV: [string, number, string][] = [
  ["Home", 110, "w-[198px] pl-[51px] border-r-2"],
  ["About Us", 179, "w-[260px] pl-[43px] border-r-2"],
  ["Classes", 148, "w-[230px] pl-[44px] border-r-2"],
  ["Nutrition", 183, "w-[266px] pl-[45px] border-r-2"],
  ["Contact Us", 214, "pl-[44px]"],
];

function Group({ title, w, className, children }: { title: string; w: number; className: string; children: React.ReactNode }) {
  return (
    <fieldset className={"ml-[203px] w-[806px] border-4 border-[#c0c0c0] px-[27px] [border-style:groove] " + className}>
      <legend className="h-[60px] px-[5px] pt-1 text-[44px] leading-[56px] [-webkit-text-stroke:1.8px_black]"><Fit w={w}>{title}</Fit></legend>
      {children}
    </fieldset>
  );
}
const Label = ({ w, children, className = "" }: { w: number; children: React.ReactNode; className?: string }) => (
  <div className={"h-[50px] text-[35px] leading-[50px] " + className}><Fit w={w}>{children}</Fit></div>
);
const Field = ({ label, w, className }: { label: string; w: number; className: string }) => (
  <div className={className}>
    <Label w={w}>{label}</Label>
    <input type="text" aria-label={label} className="mt-[6px] block h-[42px] w-[354px] rounded-[4px] border-2 border-[#767676] bg-white px-1" />
  </div>
);
const Check = ({ label, w, className }: { label: string; w: number; className: string }) => (
  <label className={"flex h-[50px] items-center pl-2 " + className}>
    <input type="checkbox" className="h-[26px] w-[26px] appearance-none rounded-[5px] border-2 border-[#767676] bg-white" />
    <span className="ml-[6px] text-[35px] leading-[50px]"><Fit w={w}>{label}</Fit></span>
  </label>
);

export default function App() {
  return (
    <div className='w-[1262px] bg-white font-["Roboto_Slab","DejaVu_Serif_Condensed","DejaVu_Serif",serif] text-black'>
      <header className="h-[496px] bg-black pt-[50px]">
        <div className="ml-[420px]"><Logo /></div>
        <nav className='mt-[22px] flex font-["Roboto_Condensed",Roboto,sans-serif] text-[51px] font-extrabold leading-[80px] text-white [-webkit-text-stroke:0.6px_white]'>
          {NAV.map(([t, w, c]) => (
            <a key={t} className={"block h-[78px] border-white " + c}><Fit w={w}>{t}</Fit></a>
          ))}
        </nav>
      </header>

      <main>
        <section className="text-center">
          <h1 className="mt-[73px] h-[72px] text-[54px] leading-[72px] [-webkit-text-stroke:2.2px_black]"><Fit w={1006}>Ready to get started? Contact us today.</Fit></h1>
          <h2 className="mt-[61px] h-[60px] text-[44px] leading-[60px] [-webkit-text-stroke:1.8px_black]"><Fit w={310}>(814) 555-9608</Fit></h2>
          <h3 className="mt-[59px] h-[48px] text-[36px] leading-[48px] [-webkit-text-stroke:1.5px_currentColor]">
            <Fit w={160}>Email us:</Fit>
            <span className="ml-[9px] text-[#666600]"><Fit w={433}>forwardfitness@club.net</Fit></span>
          </h3>
          <h3 className="mt-[50px] h-[48px] text-[36px] leading-[48px] [-webkit-text-stroke:1.5px_black]"><Fit w={995}>Visit us at : 1275 Channel Center Street, Boston, MA 02210</Fit></h3>
        </section>
        <MapPanel />

        <form className="mx-[26px] mt-[34px] h-[1988px] bg-[#f1f1f1] pt-[72px]">
          <h1 className="h-[144px] text-center text-[54px] leading-[72px] [-webkit-text-stroke:2.2px_black]">
            <Fit w={1133}>Complete the form below to begin your free</Fit>
            <Fit w={121}>trial.</Fit>
          </h1>
          <Group title="Customer Information" w={485} className="mt-[44px] pb-[38px]">
            <Field label="First Name:" w={201} className="mt-[36px]" />
            <Field label="Last Name:" w={194} className="mt-[36px]" />
            <Field label="Email:" w={110} className="mt-[38px]" />
            <Field label="Phone:" w={117} className="mt-[38px]" />
          </Group>
          <Group title="Additional Information" w={504} className="mt-[16px] pb-[26px]">
            <Label w={635} className="mt-[48px]">I would like more information about:</Label>
            <Check label="Group Fitness" w={239} className="mt-[57px]" />
            <Check label="Personal Training" w={313} className="mt-[27px]" />
            <Check label="Nutrition" w={160} className="mt-[24px]" />
          </Group>
          <Group title="Referral Source" w={338} className="mt-[16px] pb-[48px]">
            <Label w={361} className="mt-[36px]">How did you find us?</Label>
            <div className='mt-[9px] flex h-[37px] w-[216px] items-center justify-between rounded-[4px] border-2 border-[#767676] bg-white pl-[8px] pr-[6px] font-["Liberation_Sans",sans-serif] text-[26.670px] leading-[33px]'>
              <Fit w={171}>Advertisement</Fit>
              <svg viewBox="0 0 18 11" className="h-[11px] w-[18px]"><path d="M1.500 1.500 L9 9 L16.500 1.500" fill="none" stroke="#000" strokeWidth="3.600" /></svg>
            </div>
            <Label w={171} className="mt-[36px]">Question?</Label>
            <textarea aria-label="Question" className="-mt-[2px] block h-[161px] w-[534px] resize rounded-[4px] border-2 border-[#767676] bg-white" />
          </Group>
          <button type="button" className='mx-auto mt-[17px] block h-[78px] w-[142px] rounded-[20px] bg-[#b2b2b2] font-["Liberation_Sans",sans-serif] text-[35px] leading-[78px]'>
            <Fit w={109}>submit</Fit>
          </button>
        </form>
      </main>

      <footer className='mt-6 h-[132px] bg-black pt-[24px] text-center font-["Liberation_Serif",serif] text-[23px] leading-[30px] text-white'>
        <p><Fit w={388}>© Copyright 2024. All Rights Reserved.</Fit></p>
        <p className="mt-[24px]"><Fit w={238}>forwardfitness@club.net</Fit></p>
      </footer>
    </div>
  );
}
